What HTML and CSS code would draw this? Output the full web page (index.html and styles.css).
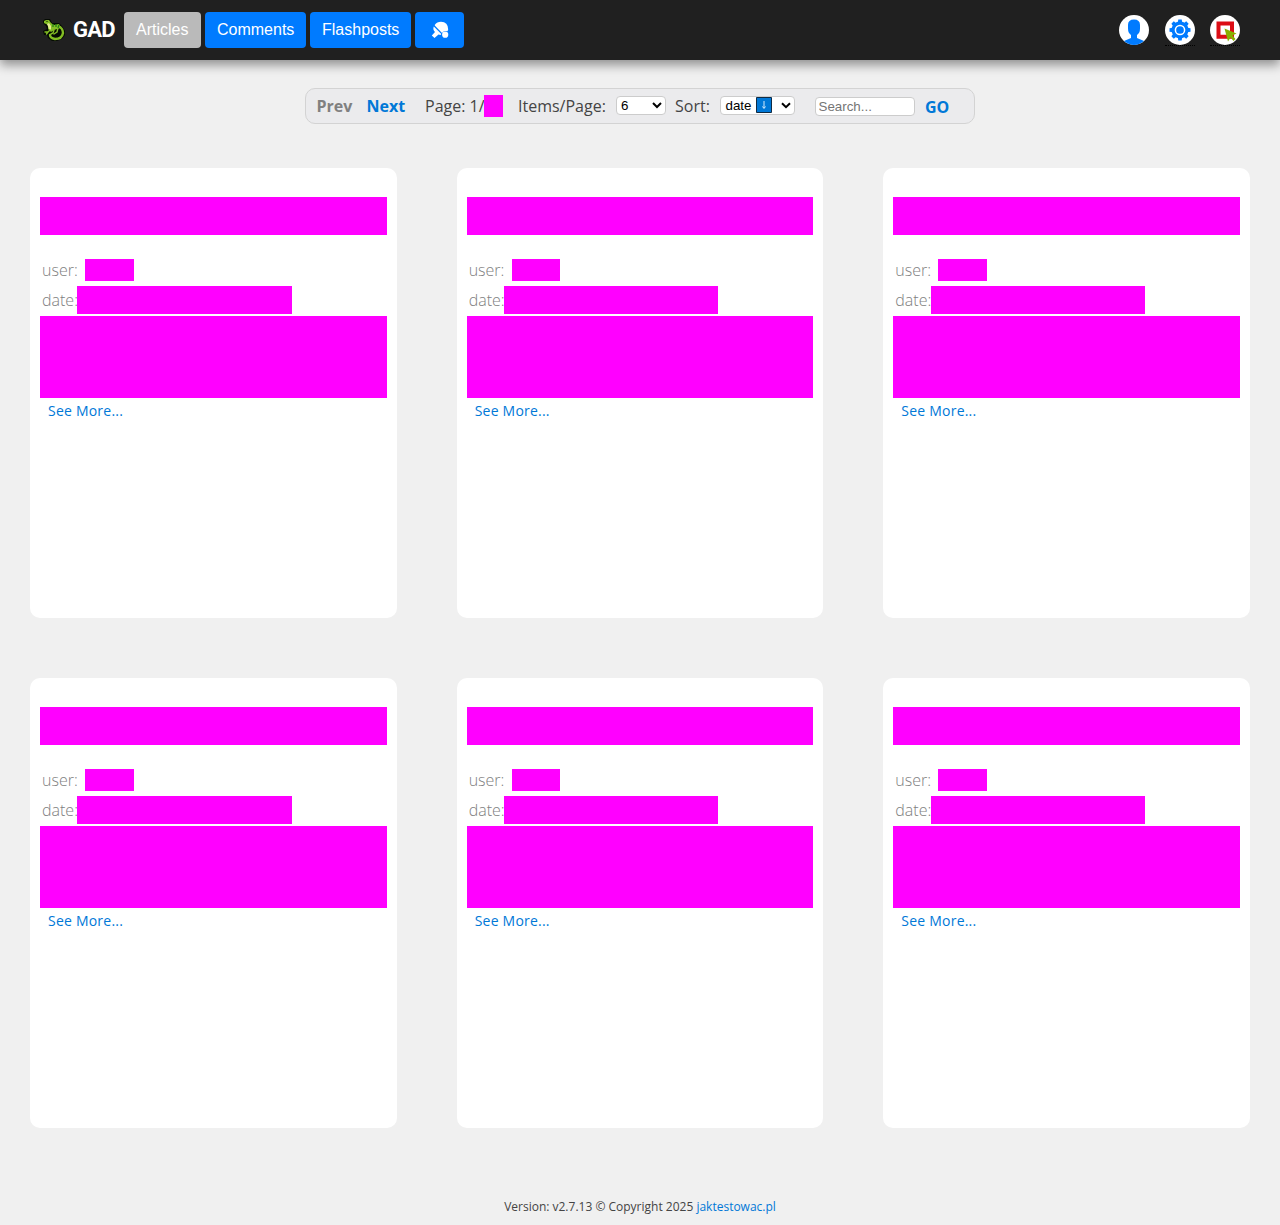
FILE: index.html
```html
<!DOCTYPE html>
<html lang="en">
<head>
<meta charset="utf-8">
<title>GAD</title>
<link rel="stylesheet" href="styles.css">
</head>
<body>
<header class="topbar">
  <a class="brand"><svg class="lizard" viewBox="0 0 24 24"><path d="M1 3L3 1H8L10 5H17L20 8L23 13V17L20 21L15 23H10L6 20L5 17H2L1 13L5 11L4 8L1 5Z" fill="#050b02"/><path d="M8 8Q11 10 16 8Q21 10 21 15Q20 21 13 21Q8 20 8 17" fill="none" stroke="#83bd24" stroke-width="2.400" stroke-linecap="round"/><path d="M2 3L4 2H7L9 5L12 7L17 6L19 10L15 11L12 12L9 14L6 11L6 7L2 5Z" fill="#83bd24"/><path d="M5 6L7 5L9 8L9 12L7 11Z" fill="#e5ee92"/><path d="M8 12L6 14L3 14M6 14L4.500 16M16 10L15 14L12 16M12 12L11 15L9 16" fill="none" stroke="#83bd24" stroke-width="1.400" stroke-linecap="round"/><path d="M11 6V9M14 6V9M17 7L16 10" stroke="#217d16" stroke-width="1.300"/><circle cx="5" cy="3.500" r=".6"/></svg><span>GAD</span></a>
  <nav class="nav">
    <a class="btn active">Articles</a><a class="btn comments">Comments</a><a class="btn">Flashposts</a><a class="btn game"><svg viewBox="0 0 18 18" width="18" height="18" fill="#fff"><path d="M3.700 4Q6 .8 10 .8Q17 1 17.200 8.500L16.500 10.300Q13 9 11 12L4 4.700Z"/><path d="M2.800 5.500L10.300 13L9.500 14L7.500 13.500L3.500 17L.8 14.500L4 11Q1.500 8.500 2.800 5.500Z"/><circle cx="14.200" cy="13.700" r="3.100"/></svg></a>
  </nav>
  <div class="tools">
    <a class="round"><svg viewBox="0 0 30 30"><circle cx="15" cy="15" r="15" fill="#fff"/><path fill="#007bff" d="M15 4.500Q21 4.500 21 10V13.500Q21 18 18 20V23L25 26Q20 30 15 30Q10 30 5 26L12 23V20Q9 18 9 13.500V10Q9 4.500 15 4.500Z"/></svg></a>
    <a class="round dotted gear"><svg viewBox="0 0 30 30"><circle cx="15" cy="15" r="15" fill="#fff"/><g fill="#007bff"><circle cx="15" cy="15" r="8.500"/><path id="tooth" d="M12.700 8L13.300 4.500H16.700L17.300 8V22L16.700 25.500H13.300L12.700 22Z"/><use href="#tooth" transform="rotate(45 15 15)"/><use href="#tooth" transform="rotate(90 15 15)"/><use href="#tooth" transform="rotate(135 15 15)"/></g><circle cx="15" cy="15" r="4.600" fill="#007bff" stroke="#fff" stroke-width="1.500"/></svg></a>
    <a class="round dotted"><svg viewBox="0 0 30 30"><circle cx="15" cy="15" r="15" fill="#fff"/><path d="M8.500 8.500H22V21.700H8.500Z" fill="none" stroke="#dc0d15" stroke-width="4"/><path d="M14.500 13.500L26.500 18.500L22.500 20.500L25.500 24L23.500 26L20.500 22.500L18 26.500Z" fill="#88b000"/></svg></a>
  </div>
</header>
<main>
  <div class="pager">
    <b class="prev">Prev</b><b class="next">Next</b><span class="page">Page: 1/</span><i class="count"></i><span class="items">Items/Page:</span>
    <select class="control amount"><option>6</option></select>
    <span class="sortlabel">Sort:</span>
    <div class="control sort">date<svg class="arrow" viewBox="0 0 16 16"><path d="M.5.5H15.500V15.500H.5Z" fill="#0078d7" stroke="#102b44"/><path d="M8 4V11M6.500 9.500L8 11.500L9.500 9.500" fill="none" stroke="#d5ebfc"/></svg><svg class="chevron" viewBox="0 0 10 7"><path d="M1 1.200L5 5.200L9 1.200" fill="none" stroke="#000" stroke-width="2"/></svg></div>
    <input class="control search" placeholder="Search..."><b class="go">GO</b>
  </div>
  <section class="cards">
    <article class="card"><div class="title"></div><div class="row user">user:<i></i></div><div class="row date"><span>date:</span><i></i></div><div class="body"></div><a class="more">See More...</a></article>
    <article class="card"><div class="title"></div><div class="row user">user:<i></i></div><div class="row date"><span>date:</span><i></i></div><div class="body"></div><a class="more">See More...</a></article>
    <article class="card"><div class="title"></div><div class="row user">user:<i></i></div><div class="row date"><span>date:</span><i></i></div><div class="body"></div><a class="more">See More...</a></article>
    <article class="card"><div class="title"></div><div class="row user">user:<i></i></div><div class="row date"><span>date:</span><i></i></div><div class="body"></div><a class="more">See More...</a></article>
    <article class="card"><div class="title"></div><div class="row user">user:<i></i></div><div class="row date"><span>date:</span><i></i></div><div class="body"></div><a class="more">See More...</a></article>
    <article class="card"><div class="title"></div><div class="row user">user:<i></i></div><div class="row date"><span>date:</span><i></i></div><div class="body"></div><a class="more">See More...</a></article>
  </section>
</main>
<footer>Version: v2.7.13 © Copyright 2025 <a>jaktestowac.pl</a></footer>
</body>
</html>
```
FILE: styles.css
```css
* { box-sizing: border-box; }
body { margin: 0; height: 1225px; background: #f0f0f0; color: #444; font: 16px/22px "Open Sans", sans-serif; overflow: hidden; }
svg { display: block; }
.topbar { height: 60px; padding: 0 40px; background: #202020; display: flex; align-items: center; box-shadow: 0 5px 10px rgba(0,0,0,.4); }
.brand { width: 84px; display: flex; align-items: center; color: #fff; font: bold 22px/36px Roboto, sans-serif; letter-spacing: -.8px; }
.lizard { width: 24px; height: 24px; margin: 0 7px 0 2px; }
.nav { display: flex; gap: 4px; }
.btn { height: 36px; padding: 0 12px; border-radius: 4px; background: #007bff; color: #fff; font: 16px/35px "Liberation Sans", Arial, sans-serif; }
.active { width: 77px; background: #bababa; }
.comments { width: 101px; }
.game { width: 49px; padding: 9px 16px; }
.tools { margin-left: auto; display: flex; }
.round { width: 30px; height: 31px; margin-left: 15px; }
.round svg { width: 30px; height: 30px; }
.dotted { border-bottom: 1px dotted #000; }
.gear { margin-left: 16px; }
.pager { width: 670px; height: 36px; margin: 28px auto 0; padding: 0 10px 0 10.5px; display: flex; align-items: center; border: 1px solid #d3d3d3; border-radius: 10px; background: #ebebed; white-space: nowrap; }
.prev { width: 50px; color: #808080; }
.next { width: 58.5px; color: #0078d7; }
.page { width: 59px; }
.count { width: 19px; height: 22px; background: #f0f; margin-right: 15px; }
.items { width: 98px; }
.control { height: 19px; border: 1px solid #ccc; border-radius: 4px; background: #fff; color: #000; font: 13.333px/17px "Liberation Sans", Arial, sans-serif; }
.amount { width: 50px; padding: 0; margin: 0 9px 2px 0; }
.sortlabel { width: 45px; }
.sort { width: 75px; padding-left: 4.5px; margin-bottom: 2px; display: flex; align-items: center; }
.arrow { width: 16px; height: 16px; margin-left: 4.5px; }
.chevron { width: 10px; height: 7px; margin-left: 9px; }
.search { width: 100px; padding: 1px 2.5px; margin: 1px 0 0 20px; }
.search::placeholder { color: #757575; }
.go { color: #0078d7; margin: 2px 0 0 10px; }
.cards { margin: 44px 30px 0; display: grid; grid-template-columns: repeat(3, 1fr); gap: 60px; }
.card { height: 450px; border-radius: 10px; background: #fff; padding: 29px 10px 0; }
.title { height: 38px; background: #f0f; margin-bottom: 24px; }
.row { display: flex; padding-left: 2px; color: #808080; font-weight: 300; }
.user { height: 22px; margin-bottom: 5px; }
.user i { width: 48.6px; height: 22px; background: #f0f; margin-left: 7.4px; }
.date { height: 28px; line-height: 28px; margin-bottom: 2px; }
.date span { width: 35.2px; }
.date i { width: 214.6px; height: 28px; background: #f0f; }
.body { height: 82px; background: #f0f; }
.more { display: block; padding: 3px 8px; font-size: 14px; line-height: 19px; letter-spacing: .22px; color: #0078d7; }
footer { margin-top: 70px; text-align: center; font-size: 12px; line-height: 17px; }
footer a { color: #0078d7; }
```
